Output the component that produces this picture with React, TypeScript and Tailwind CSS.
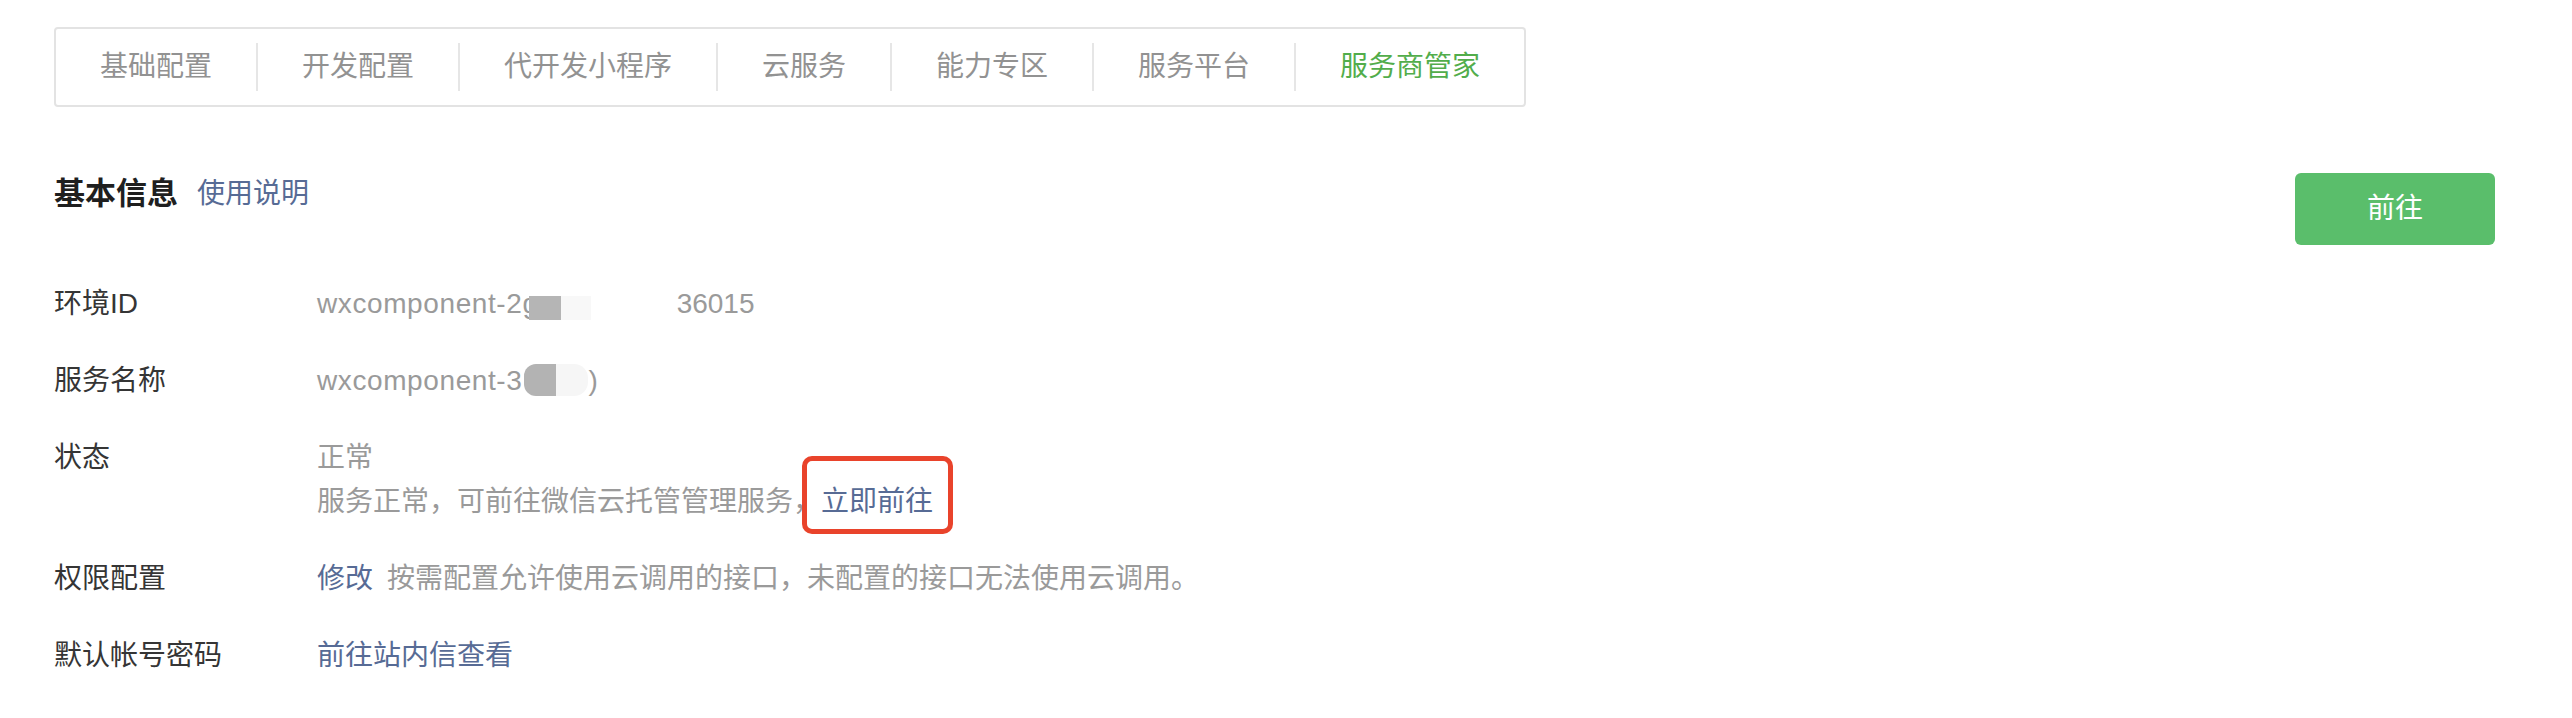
import React from "react";

const tabs = ["基础配置", "开发配置", "代开发小程序", "云服务", "能力专区", "服务平台", "服务商管家"];

function Row({ label, children }: { label: string; children: React.ReactNode }) {
  return (
    <div className="grid grid-cols-[263px_1fr] leading-[44px]">
      <div className="text-[28px] text-[#353535]">{label}</div>
      <div className="text-[28px] text-[#9a9a9a]">{children}</div>
    </div>
  );
}

export default function App() {
  return (
    <div className="min-h-screen bg-white font-['Liberation_Sans','Noto_Sans_CJK_SC',sans-serif]">
      <div className="pl-[54px] pr-[77px] pt-[27px]">
        <div className="inline-flex items-center rounded-[4px] border-2 border-[#e3e3e3] py-[14px]">
          {tabs.map((t, i) => (
            <div key={t} className="flex items-center">
              {i > 0 && <div className="h-[48px] w-[2px] bg-[#e6e6e6]" />}
              <div
                className={
                  "px-[44px] text-[28px] leading-[48px] " +
                  (i === tabs.length - 1 ? "text-[#52ad4b]" : "text-[#929292]")
                }
              >
                {t}
              </div>
            </div>
          ))}
        </div>

        <div className="mt-[65px] flex items-start justify-between">
          <div className="flex h-[44px] items-center">
            <h2 className="text-[31px] font-bold leading-[44px] text-[#1f1f1f]">基本信息</h2>
            <a className="ml-[19px] text-[28px] leading-[44px] text-[#576b95]">使用说明</a>
          </div>
          <button className="mt-[1px] h-[72px] w-[200px] rounded-[6px] bg-[#5abe6b] text-[28px] text-white">
            前往
          </button>
        </div>

        <div className="mt-[37px] flex flex-col gap-[33px]">
          <Row label="环境ID">
            <span className="inline-flex items-center">
              <span className="relative tracking-[0.6px]">
                wxcomponent-2g
                <span className="absolute right-[-22px] top-[14px] h-[24px] w-[32px] bg-[#b5b5b5]" />
                <span className="absolute right-[-52px] top-[14px] h-[24px] w-[30px] bg-[#f8f8f8]" />
              </span>
              <span className="ml-[138px]">36015</span>
            </span>
          </Row>
          <Row label="服务名称">
            <span className="inline-flex items-center">
              <span className="relative tracking-[0.6px]">
                wxcomponent-3
                <span className="absolute right-[-34px] top-[5px] h-[32px] w-[32px] rounded-l-[12px] bg-[#b3b3b3]" />
                <span className="absolute right-[-66px] top-[5px] h-[32px] w-[32px] rounded-r-[14px] bg-[#f6f6f6]" />
              </span>
              <span className="ml-[66px]">)</span>
            </span>
          </Row>
          <Row label="状态">
            <div>正常</div>
            <div>
              服务正常，可前往微信云托管管理服务，
              <span className="relative inline-block">
                <a className="text-[#576b95]">立即前往</a>
                <span className="pointer-events-none absolute left-[-19px] right-[-20px] top-[-24px] bottom-[-10px] rounded-[10px] border-[5px] border-[#e9432b]" />
              </span>
            </div>
          </Row>
          <Row label="权限配置">
            <a className="text-[#576b95]">修改</a>
            <span className="ml-[14px]">按需配置允许使用云调用的接口，未配置的接口无法使用云调用。</span>
          </Row>
          <Row label="默认帐号密码">
            <a className="text-[#576b95]">前往站内信查看</a>
          </Row>
        </div>
      </div>
    </div>
  );
}
